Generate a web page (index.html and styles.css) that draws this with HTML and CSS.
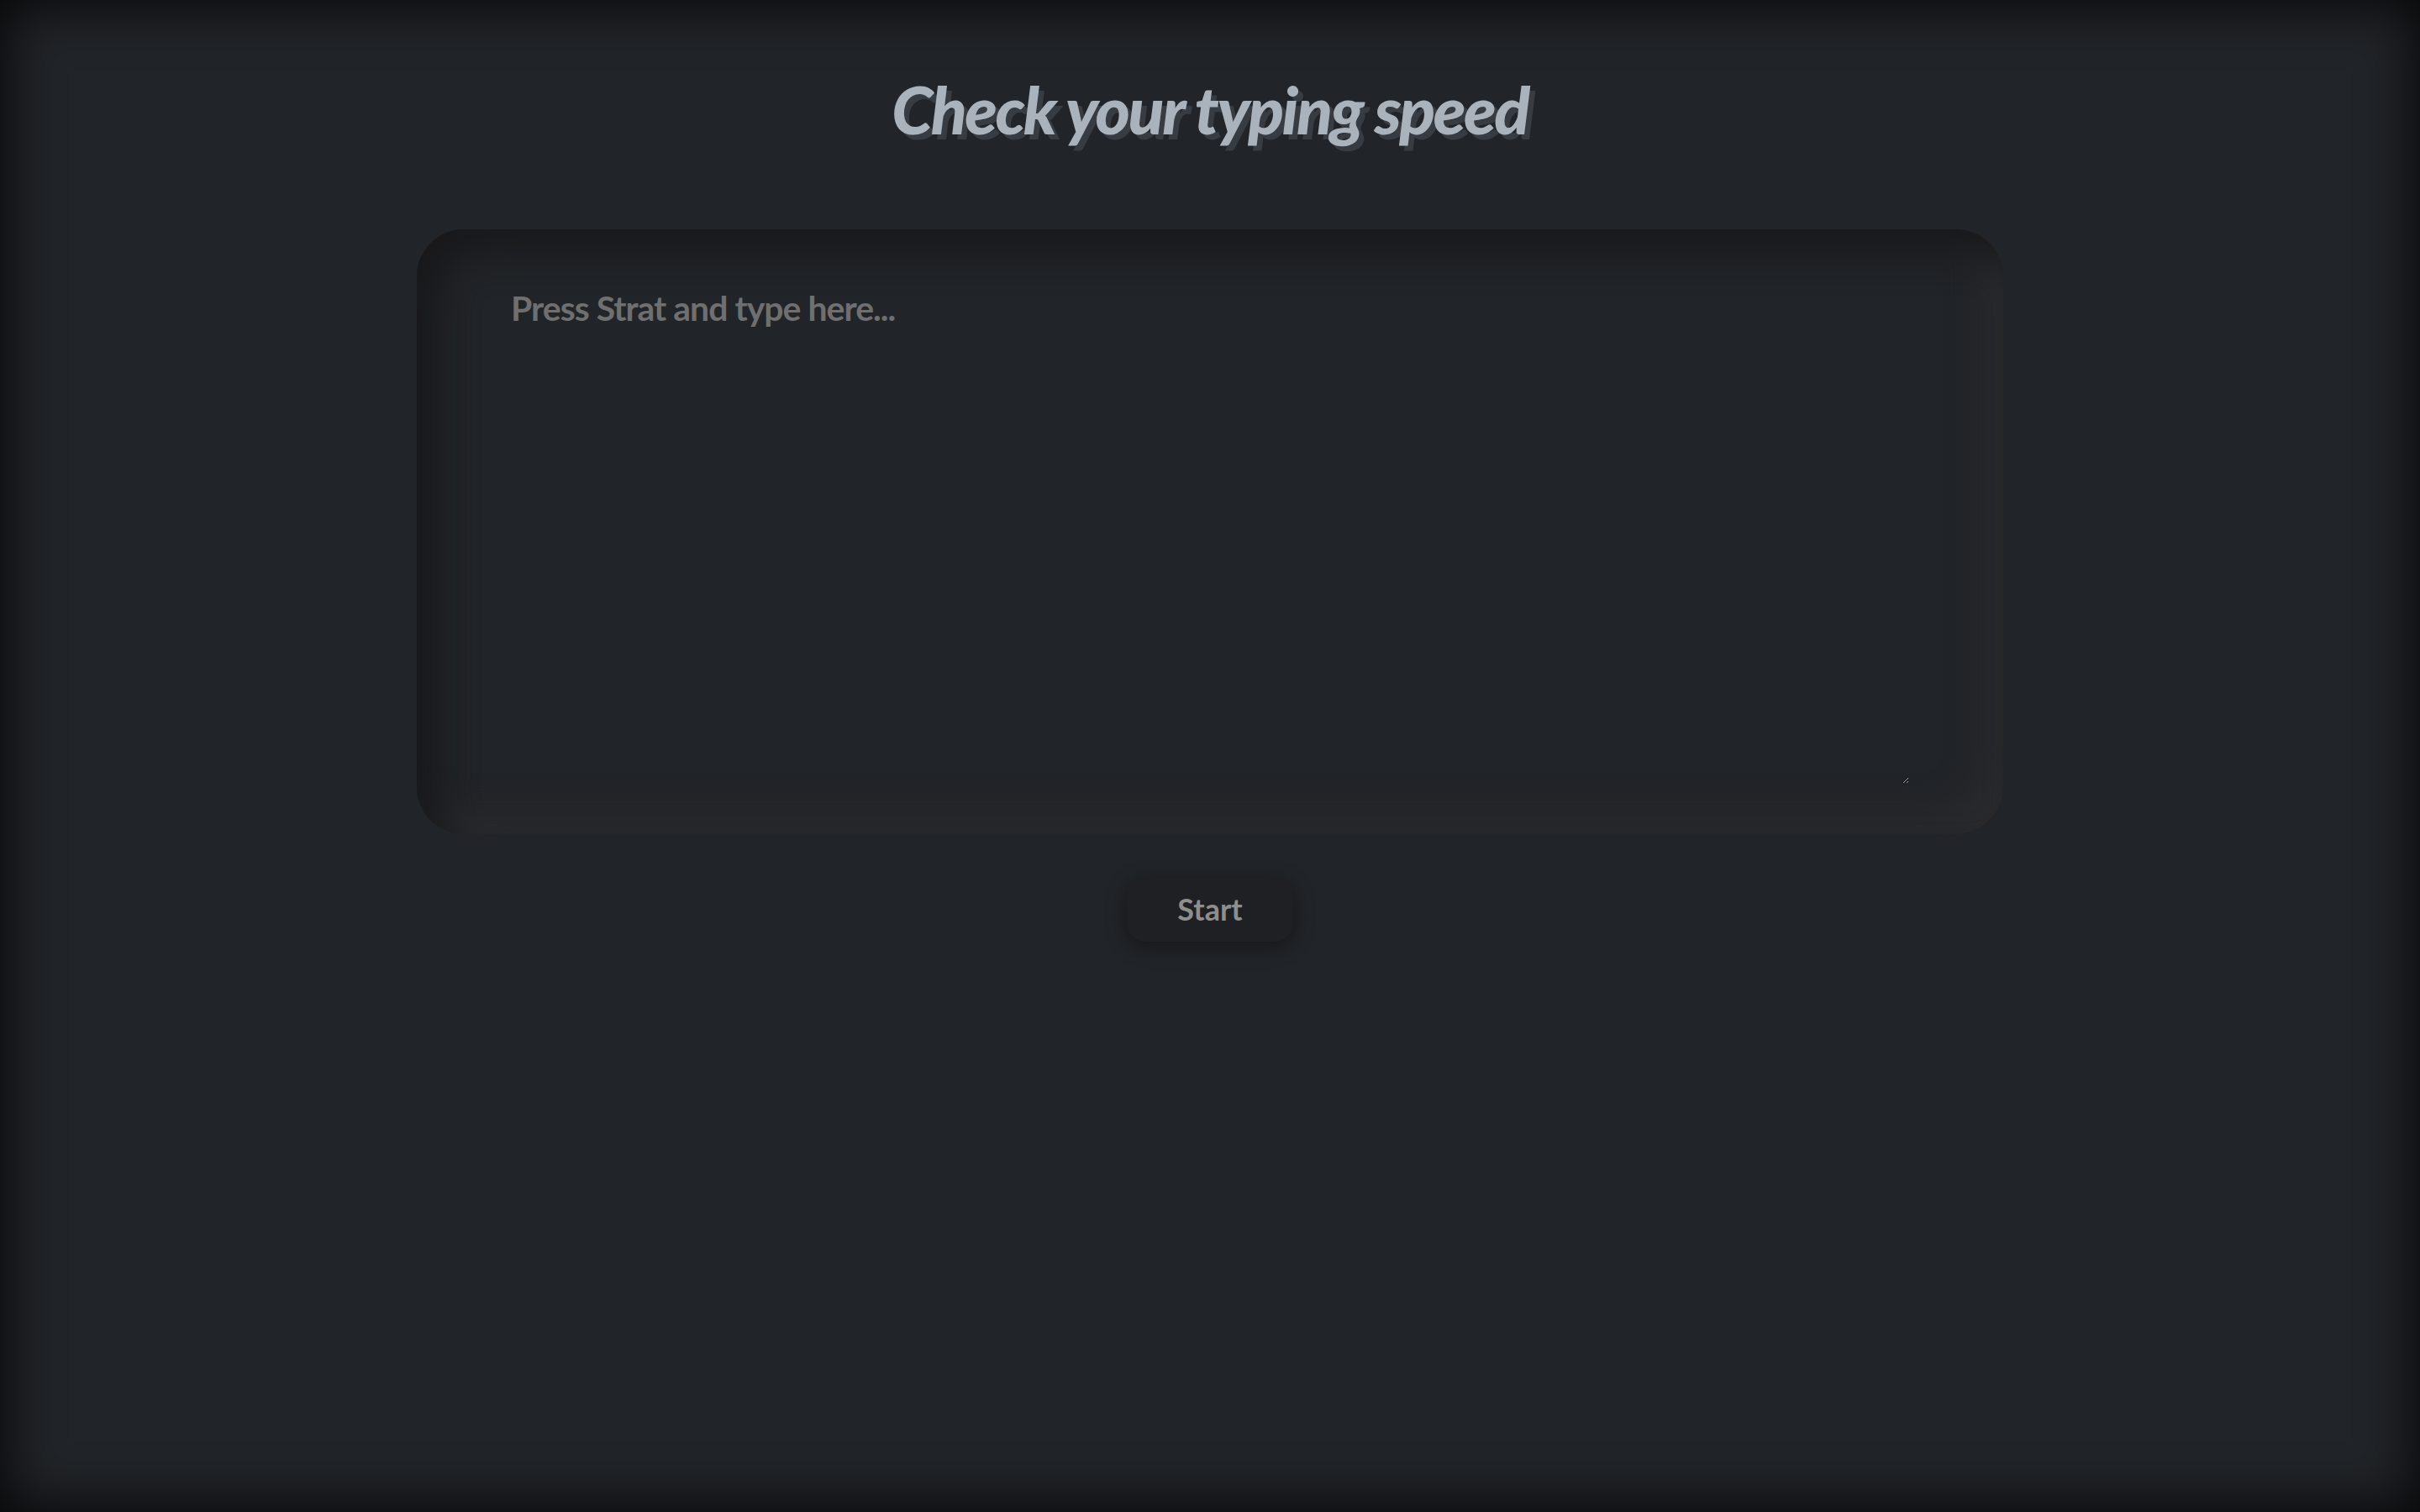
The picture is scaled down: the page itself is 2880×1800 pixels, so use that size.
FILE: index.html
```html
<!DOCTYPE html>
<html lang="en">
<head>
<meta charset="utf-8">
<title>Typing speed</title>
<link rel="stylesheet" href="styles.css">
</head>
<body>
<main class="page">
  <h1 class="title">Check your typing speed</h1>
  <div class="panel">
    <textarea class="input" placeholder="Press Strat and type here..."></textarea>
  </div>
  <button class="start">Start</button>
</main>
</body>
</html>
```
FILE: styles.css
```css
html, body {
  margin: 0;
  padding: 0;
}
body {
  background: #212428;
  font-family: Lato, "Noto Sans", sans-serif;
}
.page {
  box-sizing: border-box;
  min-height: 100vh;
  display: flex;
  flex-direction: column;
  align-items: center;
  padding-top: 83px;
  box-shadow: inset 0 0 60px 10px rgba(0, 0, 0, 0.75);
}
.title {
  margin: 0;
  font-size: 79px;
  line-height: 1.2;
  font-weight: 900;
  font-style: italic;
  letter-spacing: -2.5px;
  color: #aab2bc;
  text-shadow: 6px 6px 0 #373b42;
}
.panel {
  box-sizing: border-box;
  width: 1888px;
  height: 720px;
  margin-top: 95px;
  padding: 69px 112px 60px;
  border-radius: 56px;
  background: #212428;
  box-shadow: inset 26px 26px 44px #19191b, inset -24px -24px 40px #2a2b2d;
}
.input {
  display: block;
  box-sizing: border-box;
  width: 100%;
  height: 100%;
  padding: 0;
  background: transparent;
  border: none;
  outline: none;
  resize: both;
  color: #9a9a9a;
  font-family: Lato, sans-serif;
  font-weight: 700;
  font-size: 41px;
  letter-spacing: -1px;
}
.input::placeholder {
  color: #6f6f6f;
}
.start {
  margin-top: 51px;
  width: 198px;
  height: 77px;
  border: none;
  border-radius: 22px;
  background: #1f2023;
  color: #8e8e8e;
  font-family: Lato, sans-serif;
  font-weight: 700;
  font-size: 36px;
  box-shadow: 0 6px 24px rgba(0, 0, 0, 0.35);
}
```
